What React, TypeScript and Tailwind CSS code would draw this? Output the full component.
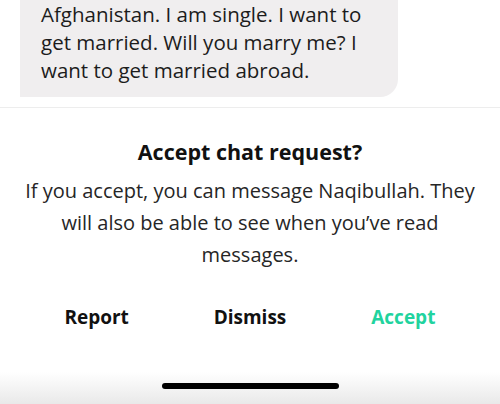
export default function App() {
  return (
    <div className="w-[500px] h-[404px] bg-white overflow-hidden relative flex flex-col font-['Open_Sans',sans-serif]">
      {/* message bubble, top cut off */}
      <div className="ml-[20px] w-[378px] bg-[#f0eeef] rounded-br-[18px] pl-[21px] pr-[4px] pb-[13px] text-[20.5px] leading-[28px] text-[#1c1c1c] shrink-0 whitespace-nowrap">
        <p>Afghanistan. I am single. I want to</p>
        <p>get married. Will you marry me? I</p>
        <p>want to get married abroad.</p>
      </div>

      <div className="mt-[10px] h-[1px] bg-[#ededed] shrink-0" />

      <h2 className="mt-[30px] text-center text-[21.5px] leading-[28px] font-bold text-[#111]">
        Accept chat request?
      </h2>
      <p className="mt-[9px] text-center text-[20px] leading-[32px] text-[#262626] whitespace-nowrap">
        If you accept, you can message Naqibullah. They
        <br />
        will also be able to see when you’ve read
        <br />
        messages.
      </p>

      <div className="mt-[34px] grid grid-cols-3 px-[20px] text-[19px] leading-[24px] font-bold text-center">
        <button className="text-[#111]">Report</button>
        <button className="text-[#111]">Dismiss</button>
        <button className="text-[#21d39e]">Accept</button>
      </div>

      {/* home indicator area */}
      <div className="absolute left-0 right-0 bottom-0 h-[32px] bg-gradient-to-b from-white to-[#e9e9e9] flex justify-center">
        <div className="mt-[11px] w-[177px] h-[6px] rounded-full bg-black" />
      </div>
    </div>
  )
}
